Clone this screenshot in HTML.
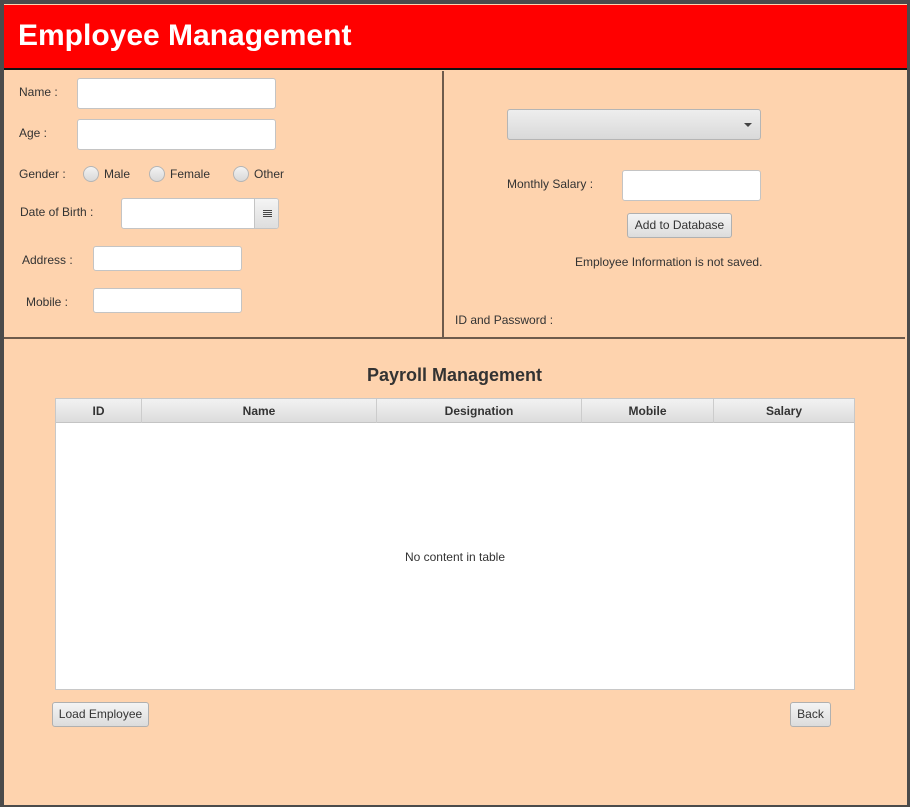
<!DOCTYPE html>
<html><head><style>
*{margin:0;padding:0;box-sizing:border-box}
body{width:910px;height:807px;background:#4b4b4b;font-family:"Liberation Sans",sans-serif;position:relative;overflow:hidden}
#app{position:absolute;left:4px;top:4px;width:903px;height:801px;background:#fed3ae}
.a{position:absolute}
.hdr{left:0;top:1px;width:903px;height:65px;background:#ff0000;border-bottom:2px solid #111}
.hdr span{position:absolute;left:14px;top:14px;color:#fff;font-size:30px;font-weight:bold}
.lbl{font-size:12px;color:#333}
.tf{background:#fff;border:1px solid #c4c4c4;border-radius:3px}
.rad{width:16px;height:16px;border-radius:50%;border:1px solid #b5b5b5;background:linear-gradient(#f3f3f3,#d8d8d8)}
.btn{border:1px solid #b0b0b0;border-radius:3px;background:linear-gradient(#f4f4f4,#dcdcdc);font-size:12px;color:#333;text-align:center}
.th{top:0;height:24px;font-size:12px;font-weight:bold;color:#333;text-align:center;line-height:24px;border-right:1px solid #ccc}
</style></head><body>
<div id="app">
<div class="a hdr"><span>Employee Management</span></div>
<div class="a" style="left:438px;top:67px;width:2px;height:267px;background:#6e5b4c"></div>
<div class="a" style="left:0;top:333px;width:901px;height:2px;background:#6e5b4c"></div>

<div class="a lbl" style="left:15px;top:81px">Name :</div>
<div class="a tf" style="left:73px;top:74px;width:199px;height:31px"></div>
<div class="a lbl" style="left:15px;top:122px">Age :</div>
<div class="a tf" style="left:73px;top:115px;width:199px;height:31px"></div>
<div class="a lbl" style="left:15px;top:163px">Gender :</div>
<div class="a rad" style="left:79px;top:162px"></div><div class="a lbl" style="left:100px;top:163px">Male</div>
<div class="a rad" style="left:145px;top:162px"></div><div class="a lbl" style="left:166px;top:163px">Female</div>
<div class="a rad" style="left:229px;top:162px"></div><div class="a lbl" style="left:250px;top:163px">Other</div>
<div class="a lbl" style="left:16px;top:201px">Date of Birth :</div>
<div class="a tf" style="left:117px;top:194px;width:158px;height:31px;overflow:hidden"><div style="position:absolute;right:0;top:0;width:24px;height:31px;border-left:1px solid #c4c4c4;background:linear-gradient(#f4f4f4,#dcdcdc)"><div style="position:absolute;left:8px;top:11px;width:9px;height:8px;background:repeating-linear-gradient(#444 0 1px,transparent 1px 2px)"></div></div></div>
<div class="a lbl" style="left:18px;top:249px">Address :</div>
<div class="a tf" style="left:89px;top:242px;width:149px;height:25px"></div>
<div class="a lbl" style="left:22px;top:291px">Mobile :</div>
<div class="a tf" style="left:89px;top:284px;width:149px;height:25px"></div>

<div class="a" style="left:503px;top:105px;width:254px;height:31px;border:1px solid #b5b5b5;border-radius:3px;background:linear-gradient(#eeeeee,#d9d9d9)"><div style="position:absolute;right:8px;top:13px;border-left:4px solid transparent;border-right:4px solid transparent;border-top:4px solid #444"></div></div>
<div class="a lbl" style="left:503px;top:173px">Monthly Salary :</div>
<div class="a tf" style="left:618px;top:166px;width:139px;height:31px"></div>
<div class="a btn" style="left:623px;top:209px;width:105px;height:25px;line-height:23px">Add to Database</div>
<div class="a lbl" style="left:571px;top:251px">Employee Information is not saved.</div>
<div class="a lbl" style="left:451px;top:309px">ID and Password :</div>

<div class="a" style="left:0;top:361px;width:901px;text-align:center;font-size:18px;font-weight:bold;color:#333">Payroll Management</div>
<div class="a" style="left:51px;top:394px;width:800px;height:292px;background:#fff;border:1px solid #c8c8c8">
<div class="a" style="left:0;top:0;width:798px;height:24px;background:linear-gradient(#f2f2f2,#dcdcdc);border-bottom:1px solid #c4c4c4"></div>
<div class="a th" style="left:0;width:86px">ID</div>
<div class="a th" style="left:86px;width:235px">Name</div>
<div class="a th" style="left:321px;width:205px">Designation</div>
<div class="a th" style="left:526px;width:132px">Mobile</div>
<div class="a th" style="left:658px;width:140px;border-right:0">Salary</div>
<div class="a lbl" style="left:0;top:151px;width:798px;text-align:center">No content in table</div>
</div>
<div class="a btn" style="left:48px;top:698px;width:97px;height:25px;line-height:23px">Load Employee</div>
<div class="a btn" style="left:786px;top:698px;width:41px;height:25px;line-height:23px">Back</div>
</div>
</body></html>
